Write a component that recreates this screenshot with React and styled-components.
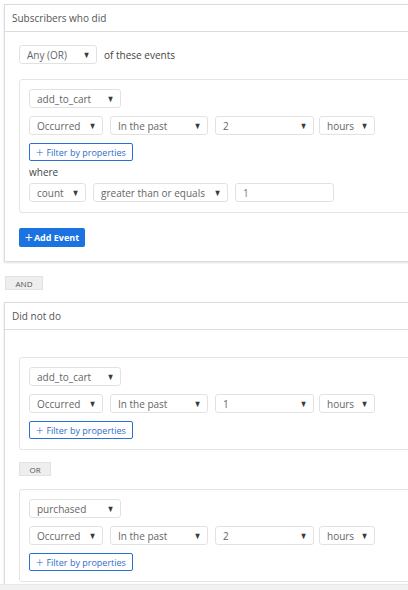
import styled, { createGlobalStyle } from "styled-components";

const GlobalStyle = createGlobalStyle`
body {
  margin: 0;
  background: #ffffff;
  font-family: "Open Sans", "Liberation Sans", sans-serif;
  overflow: hidden;
}
`;

const Viewport = styled.div`
height: 584px;
overflow: hidden;
padding: 4px 0 0 4px;
box-sizing: border-box;
`;

const ScrollTrack = styled.div`
height: 6px;
background: #f1f1f1;
border-top: 1px solid #e8e8e8;
`;

const Card = styled.div`
width: 640px;
background: #fff;
border: 1px solid #dcdcdc;
box-shadow: 0 1px 2px rgba(0, 0, 0, 0.12);
`;

const CardHeader = styled.div`
height: 26px;
display: flex;
align-items: center;
padding-left: 7px;
border-bottom: 1px solid #dcdcdc;
font-size: 10px;
color: #555;
`;

const CardBody = styled.div`
padding: ${(p) => p.$top || 13}px 14px 14px 14px;
`;

const Line = styled.div`
display: flex;
align-items: center;
gap: 7px;
height: 19px;
font-size: 10px;
color: #444;
`;

const SelectBox = styled.div`
width: ${(p) => p.$w}px;
height: 19px;
box-sizing: border-box;
border: 1px solid #e2e2e2;
border-radius: 3px;
background: #fff;
display: flex;
align-items: center;
justify-content: space-between;
padding: 0 5px 0 7px;
font-size: 10px;
line-height: 1;
color: #666;
flex-shrink: 0;
`;

const Caret = styled.span`
font-size: 9px;
line-height: 1;
color: #3a3a3a;
transform: scaleX(0.85);
`;

const InputBox = styled(SelectBox)`
justify-content: flex-start;
color: #777;
`;

const EventBox = styled.div`
margin-top: ${(p) => p.$mt || 0}px;
border: 1px solid #e4e4e4;
border-radius: 3px;
padding: 9px 9px 10px 9px;
display: flex;
flex-direction: column;
gap: 8px;
`;

const Row = styled.div`
display: flex;
align-items: center;
gap: 7px;
`;

const FilterButton = styled.button`
width: 104px;
height: 18px;
box-sizing: border-box;
border: 1px solid #2a6fd6;
border-radius: 2px;
background: #fff;
color: #2f6bc9;
font-family: inherit;
font-size: 9px;
line-height: 1;
display: flex;
align-items: center;
gap: 3px;
padding: 0 6px;
cursor: pointer;

span {
  font-size: 13px;
  line-height: 1;
  font-weight: 300;
}
`;

const Where = styled.div`
font-size: 10px;
line-height: 12px;
color: #444;
margin: -3px 0 -3px;
`;

const AddEvent = styled.button`
margin-top: 15px;
width: 66px;
height: 19px;
border: none;
border-radius: 2px;
background: #1a73e0;
color: #fff;
font-family: inherit;
font-size: 9px;
font-weight: 700;
display: flex;
align-items: center;
justify-content: center;
gap: 1px;
padding: 0;

span {
  font-size: 14px;
  font-weight: 400;
  line-height: 1;
}
`;

const Chip = styled.div`
width: ${(p) => p.$w}px;
height: 14px;
margin: ${(p) => p.$m};
background: #eeeeee;
border: 1px solid #e2e2e2;
box-sizing: border-box;
display: flex;
align-items: center;
justify-content: center;
font-size: 8px;
color: #555;
`;

const Select = ({ w, children }) => (
  <SelectBox $w={w}>
    <span>{children}</span>
    <Caret>▼</Caret>
  </SelectBox>
);

const FilterProps = () => (
  <FilterButton>
    <span>+</span>Filter by properties
  </FilterButton>
);

const TimeRow = ({ value }) => (
  <Row>
    <Select w={74}>Occurred</Select>
    <Select w={98}>In the past</Select>
    <SelectBox $w={99} style={{ marginRight: -2 }}>
      <span>{value}</span>
      <Caret>▼</Caret>
    </SelectBox>
    <Select w={56}>hours</Select>
  </Row>
);

const Event = ({ name, value, mt, children }) => (
  <EventBox $mt={mt}>
    <Row>
      <Select w={92}>{name}</Select>
    </Row>
    <TimeRow value={value} />
    <Row>
      <FilterProps />
    </Row>
    {children}
  </EventBox>
);

export default function App() {
  return (
    <>
      <GlobalStyle />
      <Viewport>
        <Card>
          <CardHeader>Subscribers who did</CardHeader>
          <CardBody>
            <Line>
              <Select w={78}>Any (OR)</Select>
              of these events
            </Line>
            <Event name="add_to_cart" value="2" mt={15}>
              <Where>where</Where>
              <Row>
                <Select w={57}>count</Select>
                <Select w={135}>greater than or equals</Select>
                <InputBox $w={99}>1</InputBox>
              </Row>
            </Event>
            <AddEvent>
              <span>+</span>Add Event
            </AddEvent>
          </CardBody>
        </Card>

        <Chip $w={38} $m="14px 0 12px 1px">AND</Chip>

        <Card>
          <CardHeader>Did not do</CardHeader>
          <CardBody $top={27}>
            <Event name="add_to_cart" value="1" />
            <Chip $w={32} $m="12px 0 0 0">OR</Chip>
            <Event name="purchased" value="2" mt={13} />
          </CardBody>
        </Card>
      </Viewport>
      <ScrollTrack />
    </>
  );
}
